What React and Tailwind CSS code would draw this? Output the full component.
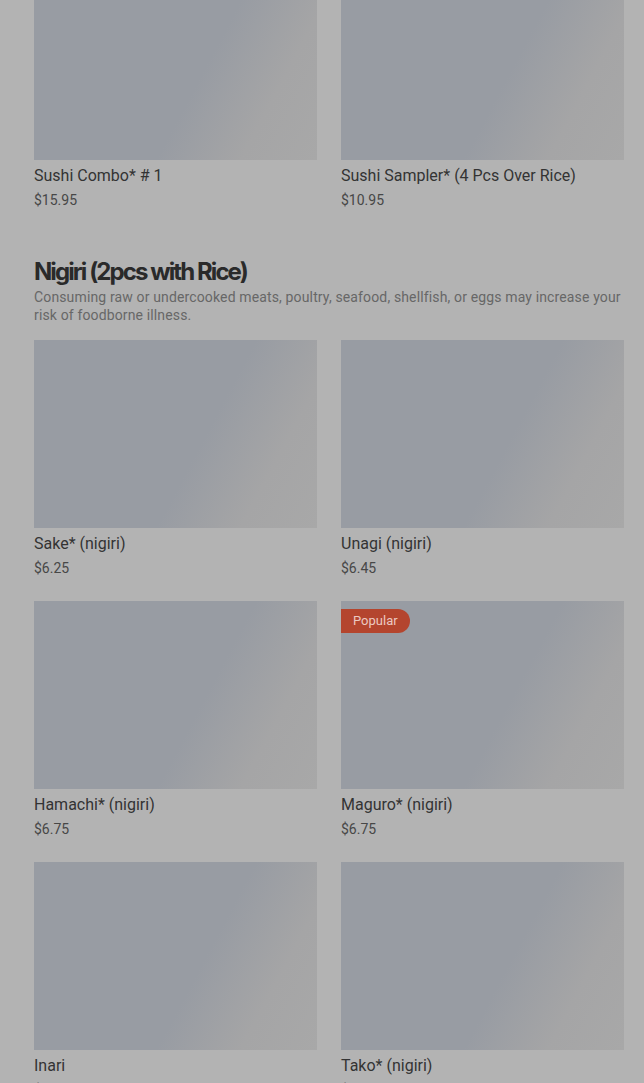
const topItems = [
  { name: 'Sushi Combo* # 1', price: '$15.95' },
  { name: 'Sushi Sampler* (4 Pcs Over Rice)', price: '$10.95' },
]

const nigiri = [
  { name: 'Sake* (nigiri)', price: '$6.25' },
  { name: 'Unagi (nigiri)', price: '$6.45' },
  { name: 'Hamachi* (nigiri)', price: '$6.75' },
  { name: 'Maguro* (nigiri)', price: '$6.75', popular: true },
  { name: 'Inari', price: '$4.95' },
  { name: 'Tako* (nigiri)', price: '$6.25' },
]

function ItemCard({ item }) {
  return (
    <div className="flex flex-col">
      <div className="relative h-[188px] w-full bg-[linear-gradient(118deg,#989ca3_58%,#a5a5a6_80%,#a8a8a8_100%)]">
        {item.popular && (
          <span className="absolute left-0 top-2 flex h-6 items-center rounded-r-full bg-[#b4452e] pl-3 pr-[12px] text-[13px] text-[#ecc9c1]">
            Popular
          </span>
        )}
      </div>
      <div className="mt-[6px] text-[16px] leading-5 text-[#333333]">{item.name}</div>
      <div className="mt-1 text-[14px] leading-5 text-[#474747]">{item.price}</div>
    </div>
  )
}

export default function App() {
  return (
    <div className="h-[1083px] overflow-hidden bg-[#b3b3b3] pl-[34px] pr-[20px] font-['Roboto','Inter',sans-serif]">
      <div className="-mt-[28px] grid grid-cols-2 gap-x-6">
        {topItems.map((item) => (
          <ItemCard key={item.name} item={item} />
        ))}
      </div>

      <h2 className="mt-[46px] font-['Inter',sans-serif] text-[24px] font-bold leading-8 tracking-[-0.08em] text-[#2a2a2a]">
        Nigiri (2pcs with Rice)
      </h2>
      <p className="text-[14px] leading-[18px] tracking-[0.01em] text-[#676767]">
        Consuming raw or undercooked meats, poultry, seafood, shellfish, or eggs may increase your risk of foodborne illness.
      </p>

      <div className="mt-4 grid grid-cols-2 gap-x-6 gap-y-[23px]">
        {nigiri.map((item) => (
          <ItemCard key={item.name} item={item} />
        ))}
      </div>
    </div>
  )
}
